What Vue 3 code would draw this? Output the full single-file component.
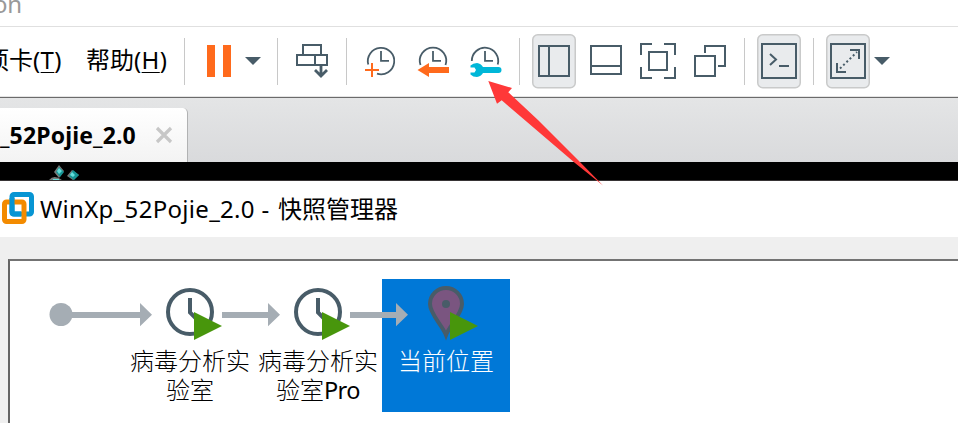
<script setup>
const nodes = [
  { lines: ['病毒分析实', '验室'], latin: '', kind: 'clock' },
  { lines: ['病毒分析实', '验室'], latin: 'Pro', kind: 'clock' },
  { lines: ['当前位置'], latin: '', kind: 'pin' },
]
</script>

<template>
  <div class="screen">
    <header class="caption"><span>on</span></header>

    <nav class="toolbar">
      <div class="menus">
        <span class="menu tabs-menu">项卡<i>(<u>T</u>)</i></span>
        <span class="menu help-menu">帮助<i>(<u>H</u>)</i></span>
      </div>
      <b class="sep"></b>
      <svg width="92" height="55" viewBox="185 34 92 55">
        <path class="orange" d="M207 45h8v32h-8zM223 45h8v32h-8z" />
        <path class="slate" d="M245 57h16l-8 8z" />
      </svg>
      <b class="sep"></b>
      <svg width="68" height="55" viewBox="278 34 68 55">
        <path class="line" d="M303 54v-9h18v9M297 55h30v10h-30zM315 55v10" />
        <path class="drop" d="M321 66v9M315 70l6 6l6-6" />
      </svg>
      <b class="sep"></b>
      <svg width="172" height="55" viewBox="347 34 172 55">
        <path class="thin" d="M368.300 64.500A13.200 13.200 0 1 1 377 73.600" />
        <path class="thin" d="M381 51v9.900h8M433 51v9.900h8M485 51v9.900h8" />
        <path class="plus" d="M365 70h14M372 63v14" />
        <path class="thin" d="M420.500 65A13.200 13.200 0 1 1 445.500 65" />
        <path class="orange" d="M417.500 70L429 63v4h20v6h-20v4z" />
        <path class="thin" d="M471.800 61A13.200 13.200 0 1 1 497.700 64.500" />
        <path class="cyan" d="M470.500 65.500Q473 63 477 63Q481 63.500 483 67H498.500a3 3 0 0 1 0 6H483Q481 76.500 477 77Q473 77 470.500 74.500V72.500H474.500L476 70L474.500 67.500H470.500z" />
      </svg>
      <b class="sep"></b>
      <svg width="224" height="55" viewBox="520 34 224 55">
        <rect class="pressed" x="532.750" y="34.750" width="42.500" height="53" rx="5" />
        <path class="line" d="M539 46h30v30h-30zM549 46v30M591 46h30v28h-30zM591 66h30" />
        <path class="line" d="M641 55V44h11M664 44h11v11M675 67v11h-11M652 78h-11V67M649 52h18v18h-18z" />
        <path class="line" d="M695 56h20v20h-20zM705 53v-7h20v20h-7" />
      </svg>
      <b class="sep"></b>
      <svg width="68" height="55" viewBox="745 34 68 55">
        <rect class="pressed" x="757.750" y="34.750" width="42.500" height="53" rx="5" />
        <path class="line" d="M762 44h34v34h-34zM770 54l6 5.500l-6 5.500M779 66h10" />
      </svg>
      <b class="sep"></b>
      <svg width="144" height="55" viewBox="814 34 144 55">
        <rect class="pressed" x="826.750" y="34.750" width="42.500" height="53" rx="5" />
        <path class="line" d="M831 44h34v34h-34zM850 50h9v9M837 63v9h9" />
        <path class="line dots" d="M840 68.500L857 52" />
        <path class="slate" d="M874 57h16l-8 8z" />
      </svg>
    </nav>

    <div class="tabstrip">
      <div class="tab">
        <span class="tab-name">_52Pojie_2.0</span>
        <svg width="18" height="18" viewBox="0 0 18 18"><path class="close" d="M2 2l14 14M16 2L2 16" /></svg>
      </div>
    </div>

    <div class="guest">
      <svg width="34" height="18" viewBox="48 162 34 18">
        <path d="M59 165l5 6l-5 7l-5-6zM72 170l7 5l-6 5l-6-4zM49 180q5-6 13 0z" fill="#777b7b" />
        <path d="M59 167l5 5l-4 5l-4-5zM73 170l6 5l-5 5l-5-4z" fill="#169494" />
        <path d="M59 168l3 3l-3 3l-2-3zM72 172l3 3l-2 2l-3-2zM53 179h6v1h-6z" fill="#65dfdc" />
      </svg>
    </div>

    <section class="dialog">
      <div class="dialog-title">
        <svg width="34" height="34" viewBox="1 192 34 34">
          <rect x="12" y="194.500" width="19.500" height="19.500" rx="2" fill="none" stroke="#0795d3" stroke-width="5" />
          <rect x="4.500" y="202" width="19.500" height="19.500" rx="2" fill="none" stroke="#f38b00" stroke-width="5" />
          <path d="M12 198v14q0 2 2 2h7" fill="none" stroke="#0795d3" stroke-width="5" />
        </svg>
        <span class="dialog-latin">WinXp_52Pojie_2.0 -</span><span class="dialog-cjk">快照管理器</span>
      </div>
      <div class="canvas">
        <svg width="78" height="70" viewBox="48 279 78 70">
          <path class="flow" d="M61 312h65v6H61z" /><circle class="flow" cx="61" cy="314.500" r="11.500" />
        </svg>
        <div v-for="(node, n) in nodes" :key="n" class="node" :class="{ selected: node.kind === 'pin' }">
          <svg width="128" height="70" viewBox="126 279 128 70">
            <path class="flow" d="M126 312h14v-9l12 11.700l-12 11.600v-8.300h-14z" />
            <path v-if="node.kind === 'clock'" class="flow" d="M222 312h32v6h-32z" />
            <template v-if="node.kind === 'clock'">
              <circle class="ring" cx="190" cy="312" r="22" />
              <path class="ring" d="M190 298v14.500l9 9" />
            </template>
            <template v-else>
              <path class="marker" d="M190 335C186 325 174 314 174 304a16 16 0 0 1 32 0C206 314 194 325 190 335z" />
              <circle class="slate" cx="190" cy="304" r="4" />
            </template>
            <path class="play" d="M194 312l28 14l-28 14z" />
          </svg>
          <div class="label">
            <div v-for="(line, i) in node.lines" :key="i">{{ line }}<span v-if="i === 1 && node.latin" class="latin">{{ node.latin }}</span></div>
          </div>
        </div>
      </div>
    </section>

    <svg class="pointer" width="120" height="108" viewBox="486 79 120 108">
      <path d="M488.300 81L512 88L508.300 92.300L538 120L578 160L603 185.500L575 163L501.700 100.300L497 103.700z" />
    </svg>
  </div>
</template>

<style>
body { margin: 0; overflow: hidden; }
</style>

<style scoped>
.screen {
  position: relative;
  width: 958px;
  height: 423px;
  overflow: hidden;
  background: #fff;
  color: #000;
  font-family: "Noto Sans", "Noto Sans CJK SC", sans-serif;
}
svg { display: block; flex: none; }
.caption {
  box-sizing: border-box;
  height: 27px;
  border-bottom: 1px solid #e0e0e0;
  color: #999;
  font-size: 24px;
  line-height: 32px;
  overflow: hidden;
}
.caption span { display: block; margin: -12px 0 0 -7px; letter-spacing: -.3px; }
.toolbar {
  display: flex;
  align-items: flex-start;
  box-sizing: border-box;
  height: 71px;
  padding-top: 7px;
  border-bottom: 1px solid #6b6b6b;
  box-shadow: inset 0 -1px #e4e4e4;
}
.menus { width: 184px; display: flex; align-items: center; height: 51px; flex: none; overflow: hidden; }
.menu { flex: none; font: 24px/36px "Noto Sans CJK SC", sans-serif; white-space: nowrap; }
.menu i { font-style: normal; font-family: "Noto Sans", sans-serif; font-size: 24px; letter-spacing: .4px; }
.menu u { text-decoration-thickness: 1px; text-underline-offset: 3px; }
.tabs-menu { width: 101px; margin-left: -15px; }
.sep { flex: none; width: 1px; height: 47px; margin-top: 4px; background: #c8c8c8; }
.line { fill: none; stroke: #485c68; stroke-width: 2; }
.drop { fill: none; stroke: #485c68; stroke-width: 2.800; }
.dots { stroke-dasharray: 2 2.500; }
.thin { fill: none; stroke: #485c68; stroke-width: 1.800; }
.plus { fill: none; stroke: #ff6a1c; stroke-width: 2; }
.orange { fill: #ff6a1c; }
.slate { fill: #485c68; }
.cyan { fill: #00b7d8; }
.pressed { fill: #e9ebed; stroke: #c9caca; stroke-width: 1.500; }
.tabstrip {
  box-sizing: border-box;
  height: 64px;
  padding-top: 10px;
  background: linear-gradient(#e4e5e6, #d9dadc);
}
.tab {
  display: flex;
  align-items: center;
  box-sizing: border-box;
  width: 188px;
  height: 54px;
  border-right: 1px solid #b1b2b3;
  border-top-right-radius: 5px;
  background: linear-gradient(#fff, #f3f3f3);
}
.tab-name { width: 155px; flex: none; font-size: 23px; font-weight: 700; letter-spacing: .15px; white-space: nowrap; }
.close { fill: none; stroke: #c7c7c7; stroke-width: 3.200; }
.guest { box-sizing: border-box; height: 19px; padding-left: 48px; background: #000; border-bottom: 1px solid #373435; }
.dialog { height: 242px; background: #efefef; }
.dialog-title { display: flex; align-items: center; height: 56px; padding-left: 1px; box-sizing: border-box; background: #fff; font-size: 24px; white-space: nowrap; }
.dialog-latin { width: 238px; margin: -2px 0 0 5px; flex: none; letter-spacing: .3px; }
.dialog-cjk { margin-top: -2px; font: 24px/36px "Noto Sans CJK SC", sans-serif; }
.canvas {
  display: flex;
  align-items: flex-start;
  box-sizing: border-box;
  height: 164px;
  margin: 22px 0 0 8px;
  padding: 18px 0 0 38px;
  border: solid #646464;
  border-width: 2px 0 0 2px;
  border-top-color: #737373;
  background: #fff;
}
.node { flex: none; width: 128px; height: 133px; }
.selected { background: #0078d7; color: #fff; }
.flow { fill: #a5adb4; }
.ring { fill: none; stroke: #485c68; stroke-width: 4; }
.marker { fill: #7a5580; stroke: #485c68; stroke-width: 4; }
.play { fill: #48960c; }
.label { margin-top: -4px; text-align: center; font: 300 24px/29px "Noto Sans CJK SC", sans-serif; white-space: nowrap; }
.latin { font: 23.500px/20px "Noto Sans", sans-serif; letter-spacing: -.5px; }
.pointer { position: absolute; left: 486px; top: 79px; fill: #ff3838; }
</style>
